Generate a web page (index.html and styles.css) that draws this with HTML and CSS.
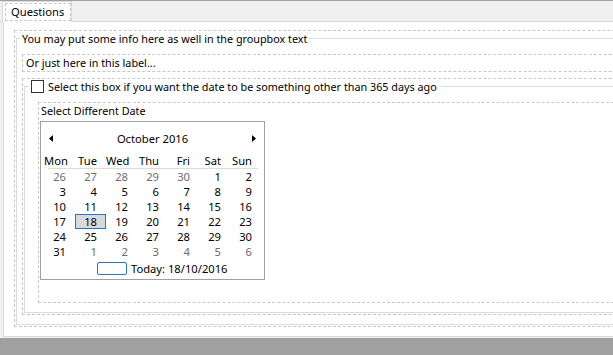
FILE: index.html
```html
<!DOCTYPE html>
<html lang="en">
<head>
    <meta charset="UTF-8">
    <meta name="viewport" content="width=device-width, initial-scale=1.0">
    <title>Questions</title>
    <link rel="stylesheet" href="styles.css">
</head>
<body>

<div class="window">
    <div class="tab-strip">
        <div class="tab"><div class="tab-focus">Questions</div></div>
    </div>

    <div class="tab-page">
        <div class="bounds">
            <fieldset class="group outer-group">
                <legend class="group-title">You may put some info here as well in the groupbox text</legend>

                <div class="info-label">Or just here in this label...</div>

                <div class="bounds nested">
                    <fieldset class="group inner-group">
                        <legend class="group-title check-title">
                            <label class="check-label">
                                <input type="checkbox" class="check" id="otherDate">
                                Select this box if you want the date to be something other than 365 days ago
                            </label>
                        </legend>

                        <div class="date-panel">
                            <div class="panel-label">Select Different Date</div>

                            <div class="calendar">
                                <div class="cal-title">
                                    <svg class="cal-arrow" width="4" height="7" viewBox="0 0 4 7"><polygon points="4,0 4,7 0,3.5" fill="#000"/></svg>
                                    <span class="cal-month" id="calMonth">October 2016</span>
                                    <svg class="cal-arrow" width="4" height="7" viewBox="0 0 4 7"><polygon points="0,0 0,7 4,3.5" fill="#000"/></svg>
                                </div>
                                <div class="cal-head">
                                    <div>Mon</div><div>Tue</div><div>Wed</div><div>Thu</div><div>Fri</div><div>Sat</div><div>Sun</div>
                                </div>
                                <div class="cal-rule"></div>
                                <div class="cal-days" id="calDays">
                                    <!-- day cells are built by the script -->
                                </div>
                                <div class="cal-today">
                                    <span class="today-box"></span>
                                    <span>Today: 18/10/2016</span>
                                </div>
                            </div>
                        </div>
                    </fieldset>
                </div>
            </fieldset>
        </div>
    </div>
</div>

<script>
    // Build the month grid, Monday first, six rows
    function buildCalendar(year, month, selected) {
        const grid = document.getElementById('calDays');
        const first = new Date(year, month, 1);
        const offset = (first.getDay() + 6) % 7;

        for (let i = 0; i < 42; i++) {
            const d = new Date(year, month, 1 - offset + i);
            const cell = document.createElement('div');
            cell.className = 'day';
            if (d.getMonth() !== month) {
                cell.classList.add('other-month');
            } else if (d.getDate() === selected) {
                cell.classList.add('selected');
            }
            cell.innerText = d.getDate();
            grid.appendChild(cell);
        }
    }

    buildCalendar(2016, 9, 18);
</script>

</body>
</html>
```

FILE: styles.css
```css
html, body {
    margin: 0;
}
body {
    width: 613px;
    height: 355px;
    overflow: hidden;
    background-color: #a0a0a0;
    font-family: "Noto Sans", sans-serif;
    font-size: 10.8px;
    color: #000;
}
.window {
    width: 700px;
    background-color: #f0f0f0;
    border-top: 1px solid #a0a0a0;
    padding-bottom: 1px;
}

/* tab header */
.tab-strip {
    height: 20px;
    border-bottom: 1px solid #d9d9d9;
}
.tab {
    box-sizing: border-box;
    width: 70px;
    height: 21px;
    margin-left: 2px;
    padding: 1px 0 0 2px;
    background-color: #fff;
    border: 1px solid #d9d9d9;
    border-bottom: none;
}
.tab-focus {
    height: 16px;
    line-height: 16px;
    padding-left: 5px;
    font-size: 11.2px;
    border: 1px dashed #c8c8c8;
}

/* tab page */
.tab-page {
    margin-left: 3px;
    padding: 8px 0 9px 10px;
    background-color: #fff;
    border-left: 1px solid #d9d9d9;
    border-bottom: 1px solid #d9d9d9;
}
.bounds {
    padding: 1px;
    border: 1px dashed #c8c8c8;
}
.group {
    margin: 0;
    min-width: 0;
    padding: 0 0 9px 0;
    border: 1px solid #dcdcdc;
}
.group-title {
    height: 13px;
    line-height: 13px;
    margin-left: 3px;
    padding: 0 2px;
}
.check-title {
    margin-left: 4px;
    padding: 0 4px 0 2px;
}
.check-label {
    display: flex;
    align-items: center;
    height: 13px;
}
.check {
    appearance: none;
    box-sizing: border-box;
    width: 13px;
    height: 13px;
    margin: 0 4px 0 0;
    background-color: #fff;
    border: 1px solid #333;
}
.info-label {
    height: 16px;
    line-height: 16px;
    margin: 9px 0 0 5px;
    padding-left: 3px;
    border: 1px dashed #c8c8c8;
}
.nested {
    margin: 6px 0 0 5px;
}
.date-panel {
    margin: 9px 0 0 13px;
    padding-bottom: 22px;
    border: 1px dashed #c8c8c8;
}
.panel-label {
    line-height: 15px;
    padding-left: 2px;
}

/* month calendar */
.calendar {
    box-sizing: border-box;
    width: 225px;
    margin: 3px 0 0 1px;
    padding: 7px 2px 4px 3px;
    font-size: 11.2px;
    background-color: #fff;
    border: 1px solid #a0a0a0;
}
.cal-title {
    display: flex;
    align-items: center;
    height: 18px;
    padding: 0 6px 0 5px;
}
.cal-month {
    flex: 1;
    text-align: center;
}
.cal-head, .cal-days {
    display: grid;
    grid-template-columns: repeat(7, 31px);
    grid-auto-rows: 15px;
    line-height: 15px;
    text-align: right;
}
.cal-head {
    margin-top: 6px;
}
.cal-head div, .day {
    padding-right: 9px;
}
.cal-rule {
    height: 1px;
    margin: 0 4px;
    background-color: #dcdcdc;
}
.day.other-month {
    color: #6d6d6d;
}
.day.selected {
    padding-right: 8px;
    background-color: #d9d9d9;
    border: 1px solid #2c72c7;
    line-height: 13px;
}
.cal-today {
    display: flex;
    align-items: center;
    height: 13px;
    margin-top: 3px;
    padding-left: 53px;
}
.today-box {
    box-sizing: border-box;
    width: 30px;
    height: 13px;
    margin-right: 4px;
    border: 1px solid #2c72c7;
    border-radius: 2px;
}
```
